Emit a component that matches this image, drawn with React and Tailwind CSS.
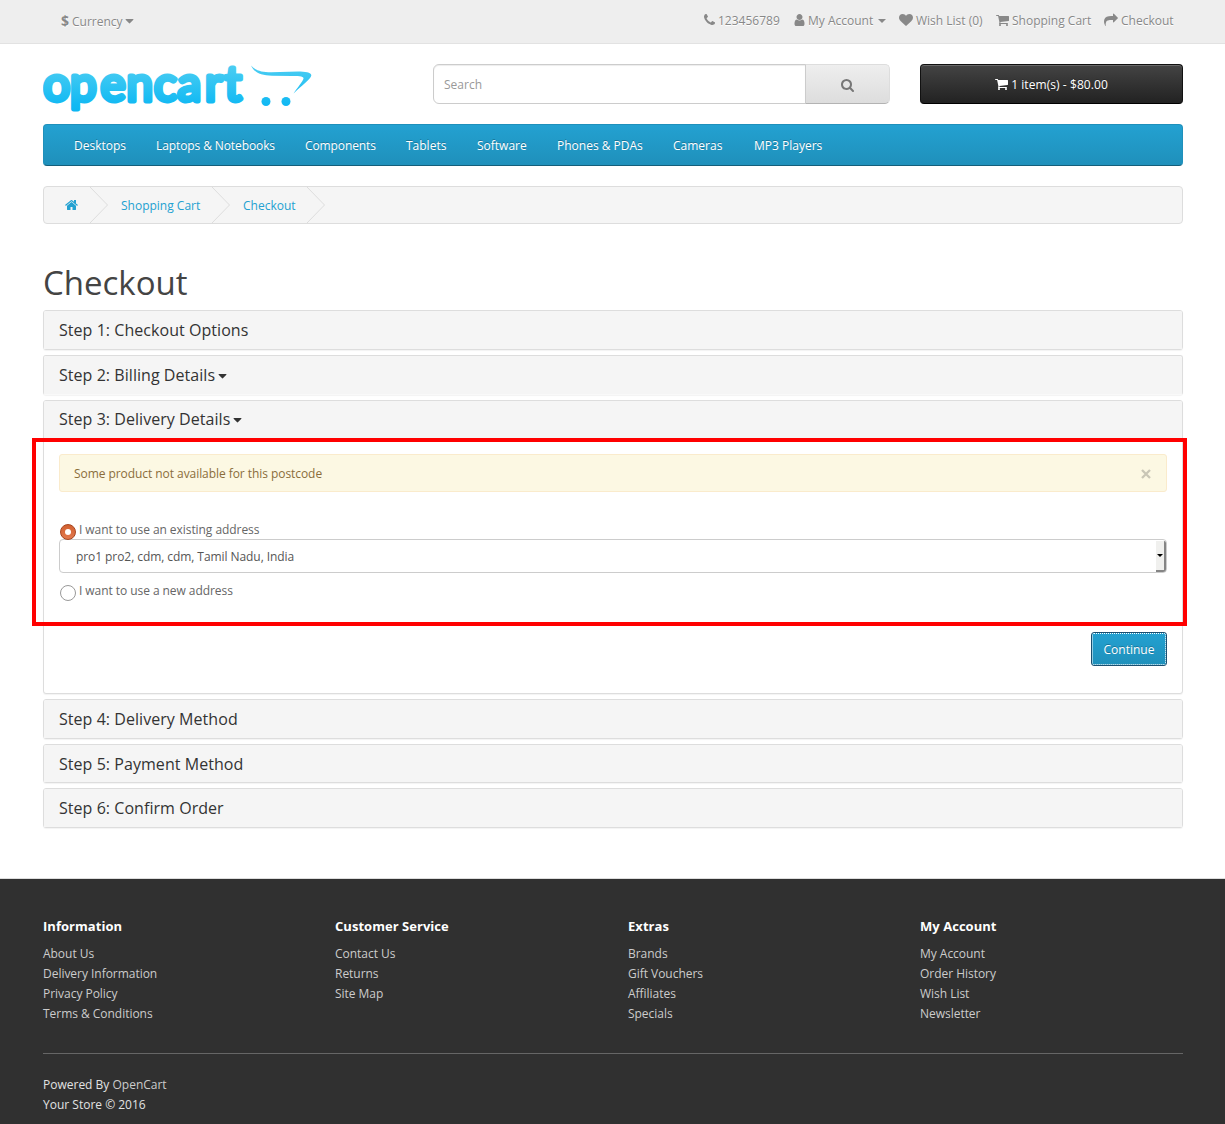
const PATHS = {
  home: [64, 1664, "M1472 992v480q0 26-19 45t-45 19h-384v-384h-256v384h-384q-26 0-45-19t-19-45v-480q0-1 .5-3t.5-3l575-474 575 474q1 2 1 6zm223-69l-62 74q-8 9-21 11h-3q-13 0-21-7l-692-577-692 577q-12 8-24 7-13-2-21-11l-62-74q-8-10-7-23.5t11-21.5l719-599q32-26 76-26t76 26l244 204v-195q0-14 9-23t23-9h192q14 0 23 9t9 23v408l219 182q10 8 11 21.5t-7 23.5z"],
  phone: [192, 1408, "M1600 1240q0 27-10 70.5t-21 68.5q-21 50-122 106-94 51-186 51-27 0-52.5-3.5t-57.5-12.5-47.5-14.5-55.5-20.5-49-18q-98-35-175-83-128-79-264.5-215.5t-215.5-264.5q-48-77-83-175-3-9-18-49t-20.5-55.5-14.5-47.5-12.5-57.5-3.5-52.5q0-92 51-186 56-101 106-122 25-11 68.5-21t70.5-10q14 0 21 3 18 6 53 76 11 19 30 54t35 63.5 31 53.5q3 4 17.5 25t21.5 35.5 7 28.5q0 20-28.5 50t-62 55-62 53-28.5 46q0 9 5 22.5t8.5 20.5 14 24 11.5 19q76 137 174 235t235 174q2 1 19 11.5t24 14 20.5 8.5 22.5 5q18 0 46-28.5t53-62 55-62 50-28.5q14 0 28.5 7t35.5 21.5 25 17.5q25 15 53.5 31t63.5 35 54 30q70 35 76 53 3 7 3 21z"],
  user: [192, 1408, "M1536 1399q0 109-62.5 187t-150.5 78h-854q-88 0-150.5-78t-62.5-187q0-85 8.5-160.5t31.5-152 58.5-131 94-89 134.5-34.5q131 128 313 128t313-128q76 0 134.5 34.5t94 89 58.5 131 31.5 152 8.5 160.5zm-256-887q0 159-112.5 271.5t-271.5 112.5-271.5-112.5-112.5-271.5 112.5-271.5 271.5-112.5 271.5 112.5 112.5 271.5z"],
  heart: [0, 1792, "M896 1664q-26 0-44-18l-624-602q-10-8-27.5-26t-55.5-65.5-68-97.5-53.5-121-23.5-138q0-220 127-344t351-124q62 0 126.5 21.5t120 58 95.5 68.5 76 68q36-36 76-68t95.5-68.5 120-58 126.5-21.5q224 0 351 124t127 344q0 221-229 450l-623 600q-18 18-44 18z"],
  cart: [64, 1664, "M704 1536q0 52-38 90t-90 38-90-38-38-90 38-90 90-38 90 38 38 90zm896 0q0 52-38 90t-90 38-90-38-38-90 38-90 90-38 90 38 38 90zm128-1088v512q0 24-16.5 42.5t-40.5 21.5l-1044 122q13 60 13 70 0 16-24 64h920q26 0 45 19t19 45-19 45-45 19h-1024q-26 0-45-19t-19-45q0-11 8-31.5t16-36 21.5-40 15.5-29.5l-177-823h-204q-26 0-45-19t-19-45 19-45 45-19h256q16 0 28.5 6.5t19.5 15.5 13 24.5 8 26 5.5 29.5 4.5 26h1201q26 0 45 19t19 45z"],
  share: [0, 1792, "M1792 640q0 26-19 45l-512 512q-19 19-45 19t-45-19-19-45v-256h-224q-98 0-175.5 6t-154 21.5-133 42.5-105.5 69.5-80 101-48.5 138.5-17.5 181q0 55 5 123 0 6 2.5 23.5t2.5 26.5q0 15-8.5 25t-23.5 10q-16 0-28-17-7-9-13-22t-13.5-30-10.5-24q-127-285-127-451 0-199 53-333 162-403 875-403h224v-256q0-26 19-45t45-19 45 19l512 512q19 19 19 45z"],
  search: [64, 1664, "M1216 832q0-185-131.5-316.5t-316.5-131.5-316.5 131.5-131.5 316.5 131.5 316.5 316.5 131.5 316.5-131.5 131.5-316.5zm512 832q0 52-38 90t-90 38q-54 0-90-38l-343-342q-179 124-399 124-143 0-273.5-55.5t-225-150-150-225-55.5-273.5 55.5-273.5 150-225 225-150 273.5-55.5 273.5 55.5 225 150 150 225 55.5 273.5q0 220-124 399l343 343q37 37 37 90z"],
  caret: [320, 1152, "M1408 704q0 26-19 45l-448 448q-19 19-45 19t-45-19l-448-448q-19-19-19-45t19-45 45-19h896q26 0 45 19t19 45z"],
};

function Icon({ name, size = 14, className = "" }) {
  const [x, w, d] = PATHS[name];
  return (
    <svg
      className={`shrink-0 ${className}`}
      width={(w / 1792) * size}
      height={size}
      viewBox={`${x} 0 ${w} 1792`}
      fill="currentColor"
    >
      <path d={d} />
    </svg>
  );
}

function Logo() {
  return (
    <svg className="-mt-4 block" width="270" height="76" viewBox="0 -16 270 76">
      <defs>
        <linearGradient id="sky" gradientUnits="userSpaceOnUse" x1="0" y1="2" x2="0" y2="50">
          <stop offset="0" stopColor="#4bcdf2" />
          <stop offset="0.8" stopColor="#12b9f3" />
          <stop offset="1" stopColor="#0ab5f2" />
        </linearGradient>
      </defs>
      <text
        x="0.200 27 57.500 83.500 111 134.500 162 181.500"
        y="36.500"
        fontFamily="Lato"
        fontWeight="400"
        fontSize="47.500"
        fill="url(#sky)"
        stroke="url(#sky)"
        strokeWidth="4.800"
        strokeLinejoin="round"
      >
        opencart
      </text>
      <path
        d="M208 1.5C213 7 219 8 228 8.200L255 7.600C262 7.600 268.500 8.500 268.300 11.500C268 15 258 22 250.500 29.500C254 24 260 17.500 260.500 14.500C260.800 12 254 12 249 12L229 11.700C218 11.500 211 8.500 208 1.500Z"
        fill="url(#sky)"
      />
      <circle cx="223" cy="37.500" r="4.500" fill="url(#sky)" />
      <circle cx="243" cy="37.500" r="4.500" fill="url(#sky)" />
    </svg>
  );
}

const menu = [
  ["Desktops", "w-[82px]"],
  ["Laptops & Notebooks", "w-[149px] tracking-[-0.1px]"],
  ["Components", "w-[101px] tracking-[-0.1px]"],
  ["Tablets", "w-[71px]"],
  ["Software", "w-[80px]"],
  ["Phones & PDAs", "w-[116px]"],
  ["Cameras", "w-[81px]"],
  ["MP3 Players", "w-[100px]"],
];

const account = [
  ["phone", "123456789", "w-[90px]"],
  ["user", "My Account", "w-[105px]", true],
  ["heart", "Wish List (0)", "w-[97px]"],
  ["cart", "Shopping Cart", "w-[108px]"],
  ["share", "Checkout", "w-[70px]"],
];

const footer = [
  ["Information", ["About Us", "Delivery Information", "Privacy Policy", "Terms & Conditions"], "w-[292px]"],
  ["Customer Service", ["Contact Us", "Returns", "Site Map"], "w-[293px]"],
  ["Extras", ["Brands", "Gift Vouchers", "Affiliates", "Specials"], "w-[292px]"],
  ["My Account", ["My Account", "Order History", "Wish List", "Newsletter"], "w-[263px]"],
];

function Crumb({ children, className }) {
  return (
    <li className={`relative flex h-full items-center ${className}`}>
      <a className="flex items-center pt-px">{children}</a>
      <svg className="absolute -right-[19px] top-0" width="20" height="36" viewBox="0 0 20 36" fill="none">
        <path d="M0.500 -0.500L18.500 18L0.500 36.500" stroke="#ddd" />
      </svg>
    </li>
  );
}

function Step({ title, caret, className = "", headClass = "h-[38px]", children }) {
  return (
    <section className={`rounded-[3px] border border-[#ddd] bg-white shadow-[0_1px_1px_rgba(0,0,0,0.05)] ${className}`}>
      <h4 className={`flex items-center rounded-t-[2px] bg-[#f5f5f5] pl-[15px] text-[16px] leading-[18px] tracking-[0.05px] text-[#333] ${headClass}`}>
        {title}
        {caret && <Icon name="caret" size={14} className="ml-[3px] mt-[1px]" />}
      </h4>
      {children}
    </section>
  );
}

export default function App() {
  return (
    <div className="h-[1124px] w-[1225px] overflow-hidden bg-white font-['Open_Sans',sans-serif] text-[12px] leading-5 text-[#666]">
      <nav className="flex h-11 justify-between border-b border-[#e2e2e2] bg-[#eee] pl-[61px] pr-[51px] text-[#888] [text-shadow:0_1px_0_#fff]">
        <div className="flex h-[43px] items-center">
          <strong className="-mt-px mr-[3px] text-[14px]">$</strong>
          Currency
          <Icon name="caret" className="ml-[2px] -mt-px" />
        </div>
        <ul className="flex h-[41px] items-center">
          {account.map(([icon, label, w, caret]) => (
            <li key={label} className={`flex items-center whitespace-nowrap ${w}`}>
              <Icon name={icon} className="-mt-px mr-[3px]" />
              {label}
              {caret && <span className="ml-[5px] border-x-4 border-t-4 border-x-transparent border-t-[#888]" />}
            </li>
          ))}
        </ul>
      </nav>

      <div className="ml-[43px] w-[1140px]">
        <header className="flex h-20 items-start pt-5">
          <div className="w-[390px]">
            <Logo />
          </div>
          <div className="flex h-10 w-[457px]">
            <div className="flex w-[373px] items-center rounded-l-md border border-[#ccc] pl-[10px] pt-px text-[#999] shadow-[inset_0_1px_1px_rgba(0,0,0,0.075)]">
              Search
            </div>
            <button className="-ml-px flex w-[85px] items-center justify-center rounded-r-[5px] border border-[#ddd] border-b-[#b3b3b3] border-l-[#ccc] bg-linear-to-b from-[#eee] to-[#ddd] pt-[2px] text-[#777]">
              <Icon name="search" size={14} />
            </button>
          </div>
          <button className="ml-[30px] flex h-10 w-[263px] items-center justify-center rounded-[4px] border border-[#111] border-b-black bg-linear-to-b from-[#444] to-[#222] pt-px text-white shadow-[inset_0_1px_0_rgba(255,255,255,0.2)] [text-shadow:0_-1px_0_rgba(0,0,0,0.25)]">
            <Icon name="cart" className="-mt-px mr-[3px]" />
            <span className="tracking-[0.07px]">1 item(s) - $80.00</span>
          </button>
        </header>

        <ul className="flex h-[42px] items-center rounded-[4px] border border-[#1f90bb] border-b-[#145e7a] bg-linear-to-b from-[#23a1d1] to-[#1f90bb] pl-[30px] pt-[2px] text-white [text-shadow:0_-1px_0_rgba(0,0,0,0.25)]">
          {menu.map(([label, w]) => (
            <li key={label} className={`shrink-0 whitespace-nowrap ${w}`}>{label}</li>
          ))}
        </ul>

        <ul className="mt-5 flex h-[38px] overflow-hidden rounded-[4px] border border-[#ddd] bg-[#f5f5f5] text-[#23a1d1]">
          <Crumb className="w-[46px] pl-[20.500px]"><Icon name="home" className="-mt-[2px]" /></Crumb>
          <Crumb className="w-[122px] pl-[31px]">Shopping Cart</Crumb>
          <Crumb className="w-[95px] pl-[31px]">Checkout</Crumb>
        </ul>

        <h1 className="mt-[40px] h-[46px] text-[33px] leading-[38px] text-[#444]">Checkout</h1>

        <div className="relative flex flex-col">
          <Step title="Step 1: Checkout Options" />
          <Step title="Step 2: Billing Details" caret className="mt-[5px] border-b-[#f9f9f9]" />
          <Step title="Step 3: Delivery Details" caret className="mt-[5px] h-[294px]" headClass="h-[37px] pb-px">
            <div className="px-[15px] pt-[16px]">
              <div className="flex h-[38px] items-center justify-between rounded-[3px] border border-[#faebcc] bg-[#fcf8e3] pl-[14px] pr-[15px] text-[#8a6d3b]">
                <span className="pt-px tracking-[-0.06px]">Some product not available for this postcode</span>
                <svg className="mt-[2px]" width="10" height="10" viewBox="0 0 10 10" fill="none">
                  <path d="M1 1L9 9M9 1L1 9" stroke="#c9c6b6" strokeWidth="2.300" />
                </svg>
              </div>
              <label className="mt-[28px] flex h-[19px] items-start gap-[3px] pl-px tracking-[-0.06px]">
                <span className="mt-[4px] flex size-4 shrink-0 items-center justify-center rounded-full border border-[#a8451f] bg-linear-to-b from-[#d2602f] to-[#e27a4e]">
                  <span className="size-[6px] rounded-full bg-white" />
                </span>
                I want to use an existing address
              </label>
              <div className="flex h-[34px] items-center justify-between rounded-[4px] border border-[#ccc] pl-4 text-[#555]">
                <span className="pt-px tracking-[-0.07px]">pro1 pro2, cdm, cdm, Tamil Nadu, India</span>
                <span className="mt-[1px] flex h-[31px] w-[10px] items-center justify-center rounded-br-[3px] rounded-tr-[2px] border-b-2 border-r-2 border-[#858585] bg-[#f0f0ee]">
                  <span className="shrink-0 border-x-[3px] border-t-[3px] border-x-transparent border-t-black" />
                </span>
              </div>
              <label className="mt-[8px] flex h-[23px] items-start gap-[3px] pl-px tracking-[-0.06px]">
                <span className="mt-[4px] size-4 shrink-0 rounded-full border border-[#999] bg-white" />
                I want to use a new address
              </label>
              <div className="mt-[28px] flex justify-end">
                <button className="h-[34px] w-[76px] rounded-[3px] border border-[#1b4f70] bg-linear-to-b from-[#23a1d1] to-[#1f90bb] pt-px text-white outline-1 -outline-offset-2 outline-dotted outline-white [text-shadow:0_-1px_0_rgba(0,0,0,0.25)]">
                  Continue
                </button>
              </div>
            </div>
          </Step>
          <Step title="Step 4: Delivery Method" className="mt-[5px]" />
          <Step title="Step 5: Payment Method" className="mt-[5px]" headClass="h-[37px]" />
          <Step title="Step 6: Confirm Order" className="mt-[5px]" />
          <div className="pointer-events-none absolute -left-[11px] top-[128px] h-[188px] w-[1155px] border-4 border-[#f00]" />
        </div>
      </div>

      <footer className="mt-[50px] h-[246px] border-t border-[#ddd] bg-[#303030] pt-[38px] text-[#ccc]">
        <div className="ml-[43px] w-[1140px]">
          <div className="flex h-[136px]">
            {footer.map(([title, links, w]) => (
              <div key={title} className={w}>
                <h5 className="mb-[9px] text-[13px] font-bold leading-[18px] tracking-[0.04px] text-white">{title}</h5>
                <ul className="tracking-[-0.03px]">
                  {links.map((l) => <li key={l}>{l}</li>)}
                </ul>
              </div>
            ))}
          </div>
          <p className="border-t border-[#666] pt-[21px] text-[#e2e2e2]">
            Powered By <a className="text-[#ccc]">OpenCart</a>
            <br />
            Your Store © 2016
          </p>
        </div>
      </footer>
    </div>
  );
}
